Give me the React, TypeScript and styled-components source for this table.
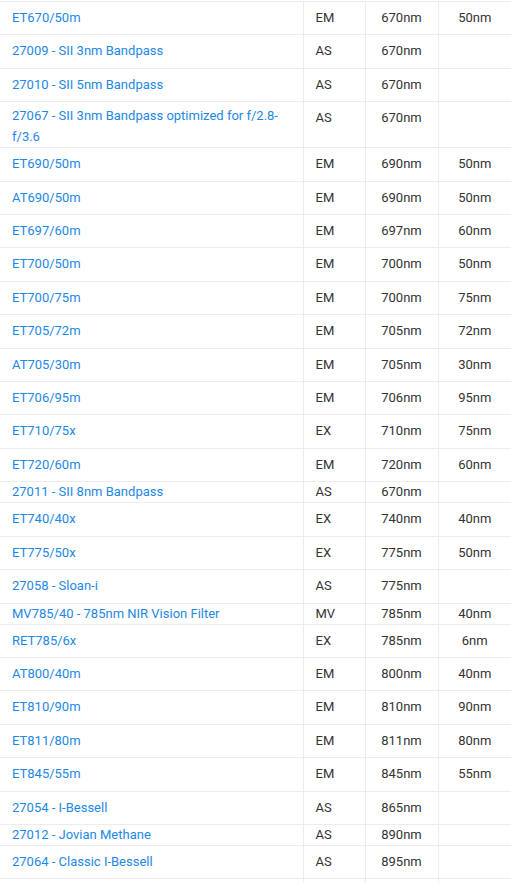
import React from 'react'
import styled, { createGlobalStyle } from 'styled-components'

const GlobalStyle = createGlobalStyle`
  body {
    margin: 0;
    background: #fff;
    font-family: Roboto, 'Liberation Sans', Arial, sans-serif;
  }
`

const Table = styled.table`
  margin-top: 1px;
  width: 511px;
  table-layout: fixed;
  border-collapse: collapse;
  font-size: 13px;
  color: #333;
`

const Column = styled.col<{ $width: number }>`
  width: ${(p) => p.$width}px;
`

const Cell = styled.td<{ $compact?: boolean; $wrap?: boolean; $center?: boolean }>`
  padding: ${(p) => (p.$compact ? '0 12px' : p.$wrap ? '3px 12px 0' : '6px 12px')};
  line-height: ${(p) => (p.$compact ? '20px' : p.$wrap ? '21px' : '20.4px')};
  height: ${(p) => (p.$compact ? '20px' : 'auto')};
  vertical-align: top;
  text-align: ${(p) => (p.$center ? 'center' : 'left')};
  border: 1px solid #ececec;

  &:first-child {
    border-left: none;
  }
  &:last-child {
    border-right: none;
  }
`

const FilterLink = styled.a`
  color: #1e88e5;
  text-decoration: none;
`

type Filter = {
  name: string
  type: string
  cwl: string
  bw?: string
  size?: 'compact' | 'wrap'
}

const filters: Filter[] = [
  { name: 'ET670/50m', type: 'EM', cwl: '670nm', bw: '50nm' },
  { name: '27009 - SII 3nm Bandpass', type: 'AS', cwl: '670nm' },
  { name: '27010 - SII 5nm Bandpass', type: 'AS', cwl: '670nm' },
  { name: '27067 - SII 3nm Bandpass optimized for f/2.8-f/3.6', type: 'AS', cwl: '670nm', size: 'wrap' },
  { name: 'ET690/50m', type: 'EM', cwl: '690nm', bw: '50nm' },
  { name: 'AT690/50m', type: 'EM', cwl: '690nm', bw: '50nm' },
  { name: 'ET697/60m', type: 'EM', cwl: '697nm', bw: '60nm' },
  { name: 'ET700/50m', type: 'EM', cwl: '700nm', bw: '50nm' },
  { name: 'ET700/75m', type: 'EM', cwl: '700nm', bw: '75nm' },
  { name: 'ET705/72m', type: 'EM', cwl: '705nm', bw: '72nm' },
  { name: 'AT705/30m', type: 'EM', cwl: '705nm', bw: '30nm' },
  { name: 'ET706/95m', type: 'EM', cwl: '706nm', bw: '95nm' },
  { name: 'ET710/75x', type: 'EX', cwl: '710nm', bw: '75nm' },
  { name: 'ET720/60m', type: 'EM', cwl: '720nm', bw: '60nm' },
  { name: '27011 - SII 8nm Bandpass', type: 'AS', cwl: '670nm', size: 'compact' },
  { name: 'ET740/40x', type: 'EX', cwl: '740nm', bw: '40nm' },
  { name: 'ET775/50x', type: 'EX', cwl: '775nm', bw: '50nm' },
  { name: '27058 - Sloan-i', type: 'AS', cwl: '775nm' },
  { name: 'MV785/40 - 785nm NIR Vision Filter', type: 'MV', cwl: '785nm', bw: '40nm', size: 'compact' },
  { name: 'RET785/6x', type: 'EX', cwl: '785nm', bw: '6nm' },
  { name: 'AT800/40m', type: 'EM', cwl: '800nm', bw: '40nm' },
  { name: 'ET810/90m', type: 'EM', cwl: '810nm', bw: '90nm' },
  { name: 'ET811/80m', type: 'EM', cwl: '811nm', bw: '80nm' },
  { name: 'ET845/55m', type: 'EM', cwl: '845nm', bw: '55nm' },
  { name: '27054 - I-Bessell', type: 'AS', cwl: '865nm' },
  { name: '27012 - Jovian Methane', type: 'AS', cwl: '890nm', size: 'compact' },
  { name: '27064 - Classic I-Bessell', type: 'AS', cwl: '895nm' },
]

export default function App() {
  return (
    <>
      <GlobalStyle />
      <Table>
        <colgroup>
          <Column $width={303} />
          <Column $width={62} />
          <Column $width={73} />
          <Column $width={73} />
        </colgroup>
        <tbody>
          {filters.map(({ name, type, cwl, bw, size }) => {
            const compact = size === 'compact'
            return (
              <tr key={name}>
                <Cell $compact={compact} $wrap={size === 'wrap'}>
                  <FilterLink href="#">{name}</FilterLink>
                </Cell>
                <Cell $compact={compact}>{type}</Cell>
                <Cell $compact={compact} $center>
                  {cwl}
                </Cell>
                <Cell $compact={compact} $center>
                  {bw ?? ''}
                </Cell>
              </tr>
            )
          })}
          <tr>
            <Cell />
            <Cell />
            <Cell />
            <Cell />
          </tr>
        </tbody>
      </Table>
    </>
  )
}
